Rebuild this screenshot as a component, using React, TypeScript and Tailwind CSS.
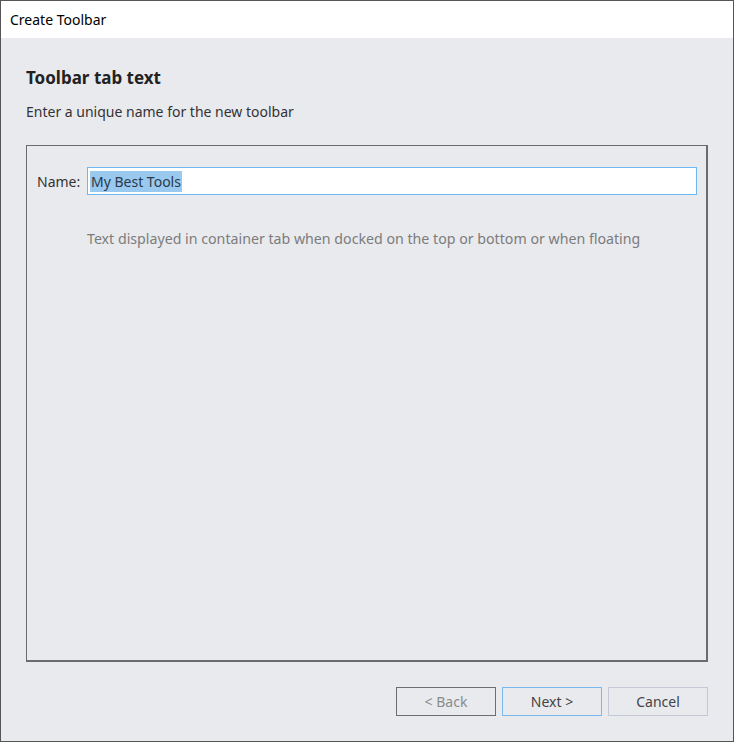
import React from "react";

const font = { fontFamily: '"Segoe UI", "Noto Sans", "Open Sans", sans-serif' };

export default function App() {
  return (
    <div
      className="w-[734px] h-[742px] border border-[#555555] bg-[#e9eaee] flex flex-col text-[#222222] overflow-hidden"
      style={font}
    >
      <div className="h-[37px] bg-white flex items-center pl-[9px] text-[14px] text-black shrink-0">
        Create Toolbar
      </div>
      <div className="flex-1 flex flex-col px-[25px]">
        <div className="h-[26px] mt-[27px] flex items-center text-[17px] font-bold text-[#222222]">
          Toolbar tab text
        </div>
        <div className="h-[20px] mt-[10px] flex items-center text-[14px] text-[#333333]">
          Enter a unique name for the new toolbar
        </div>
        <div className="mt-[24px] h-[517px] border border-[#6b6b6b] border-r-2 border-b-2 flex flex-col pl-[10px] pr-[9px] pt-[21px]">
          <div className="flex items-center h-[28px]">
            <span className="text-[14px] text-[#333333] w-[50px]">Name:</span>
            <div className="flex-1 h-[28px] bg-white border border-[#6cb8f6] flex items-center pl-[2px]">
              <span className="bg-[#99c9ef] text-[#2a3a4a] text-[14px] h-[21px] flex items-center px-[1px]">
                My Best Tools
              </span>
            </div>
          </div>
          <div className="ml-[50px] mt-[34px] text-[14.2px] text-[#7c7c7c] h-[20px] flex items-center">
            Text displayed in container tab when docked on the top or bottom or when floating
          </div>
        </div>
        <div className="flex justify-end gap-[6px] mt-[25px]">
          <button className="w-[100px] h-[29px] border border-[#6e6e6e] bg-[#e9eaee] text-[14px] text-[#8a8a8a] flex items-center justify-center">
            &lt; Back
          </button>
          <button className="w-[100px] h-[29px] border border-[#7ab8f0] bg-[#e9eaee] text-[14px] text-[#444444] flex items-center justify-center">
            Next &gt;
          </button>
          <button className="w-[100px] h-[29px] border border-[#c5c8d6] bg-[#e9eaee] text-[14px] text-[#444444] flex items-center justify-center">
            Cancel
          </button>
        </div>
      </div>
    </div>
  );
}
